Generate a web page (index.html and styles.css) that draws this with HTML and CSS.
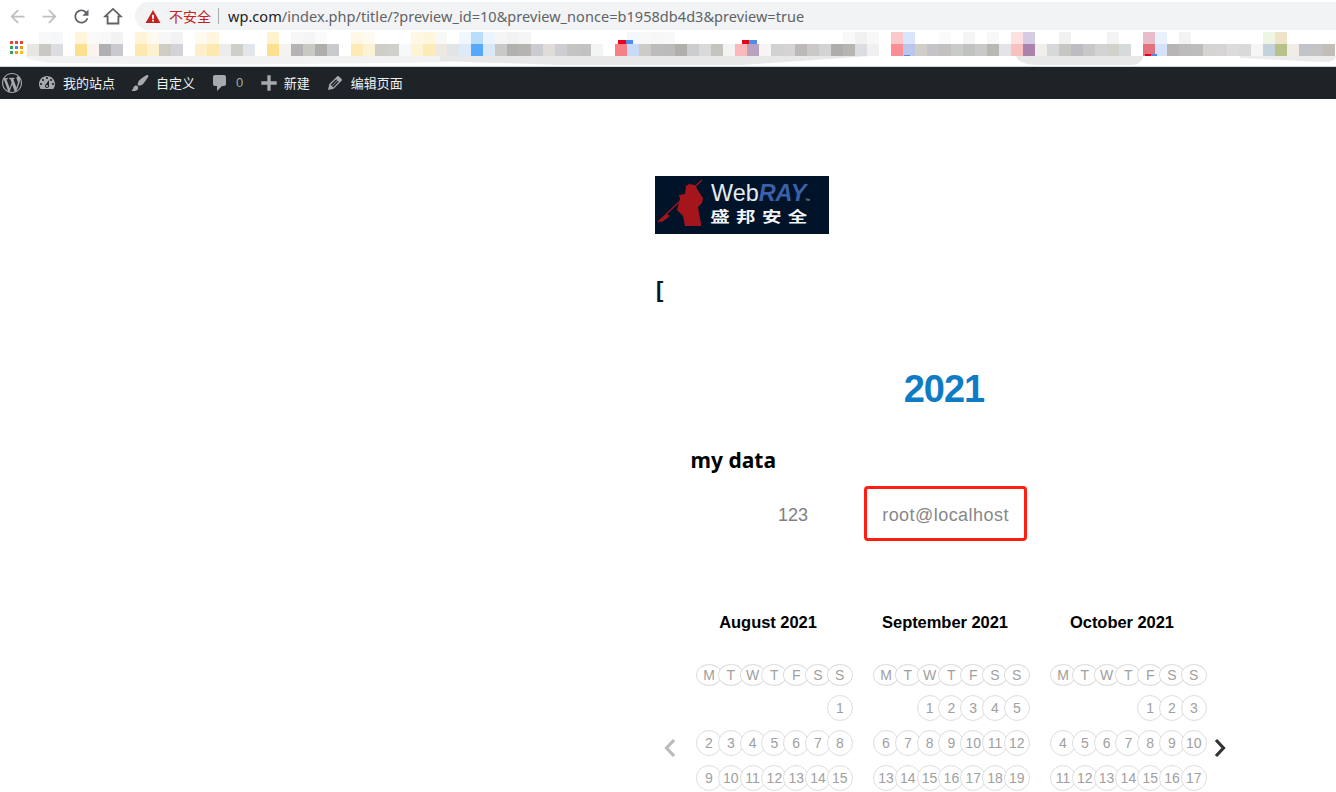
FILE: index.html
```html
<!DOCTYPE html>
<html lang="zh-CN">
<head>
<meta charset="utf-8">
<title>2021</title>
<link rel="stylesheet" href="styles.css">
</head>
<body>
<header class="chrome">
  <div class="toolbar">
    <nav class="nav-icons">
      <svg class="nav-icon muted" viewBox="0 0 24 24"><path d="M20 11H7.83l5.59-5.59L12 4l-8 8 8 8 1.41-1.41L7.83 13H20v-2z"/></svg>
      <svg class="nav-icon muted" viewBox="0 0 24 24"><path d="M4 11h12.17l-5.59-5.59L12 4l8 8-8 8-1.41-1.41L16.17 13H4v-2z"/></svg>
      <svg class="nav-icon" viewBox="0 0 24 24"><path d="M17.65 6.35C16.2 4.9 14.21 4 12 4c-4.42 0-7.99 3.58-7.99 8s3.57 8 7.99 8c3.73 0 6.84-2.55 7.73-6h-2.08c-.82 2.33-3.04 4-5.65 4-3.31 0-6-2.69-6-6s2.69-6 6-6c1.66 0 3.14.69 4.22 1.78L13 11h7V4l-2.35 2.35z"/></svg>
      <svg class="nav-icon home" viewBox="0 0 24 24"><path d="M2.5 12.5 12 3.5l9.5 9H18.5V21h-13v-8.500z"/></svg>
    </nav>
    <div class="omnibox">
      <svg class="warn" viewBox="0 0 16 14"><path class="warn-tri" d="M8 0 16 14H0z"/><path class="warn-bang" d="M7 5h2v4.500H7zM7 10.500h2v2H7z"/></svg>
      <span class="insecure">不安全</span>
      <span class="sep"></span>
      <span class="url"><b>wp.com</b>/index.php/title/?preview_id=10&amp;preview_nonce=b1958db4d3&amp;preview=true</span>
    </div>
  </div>
  <svg class="bookmarks" width="1336" height="36" viewBox="0 0 1336 36">
    <path fill="#f2f2f2" d="M25 26H450V32Q250 36 60 33 30 32 25 26z"/>
    <path fill="#e8e8e8" d="M440 26H870Q800 31 740 35H560Q500 33 440 31z"/>
    <path fill="#e8e8e8" d="M1016 26H1143Q1142 35 1130 35H1040Q1018 35 1016 26z"/>
    <path fill="#ececec" d="M1240 26H1336Q1336 33 1320 32L1240 28z"/>
    <g class="apps">
      <rect x="10" y="11" fill="#ea4335"/><rect x="15" y="11" fill="#ea4335"/><rect x="20" y="11" fill="#ea4335"/>
      <rect x="10" y="16" fill="#34a853"/><rect x="15" y="16" fill="#4285f4"/><rect x="20" y="16" fill="#f29900"/>
      <rect x="10" y="21" fill="#34a853"/><rect x="15" y="21" fill="#f29900"/><rect x="20" y="21" fill="#fbbc04"/>
    </g>
    <g class="tiles top-row">
      <rect x="39" fill="#f8f8f8"/><rect x="51" fill="#f6f7f9"/><rect x="75" fill="#fff5dc"/><rect x="87" fill="#fafafa"/><rect x="99" fill="#f8f8f8"/><rect x="111" fill="#f2f2f2"/>
      <rect x="135" fill="#fff4d8"/><rect x="147" fill="#fffaf0"/><rect x="159" fill="#f7f7f7"/><rect x="171" fill="#f2f2f2"/><rect x="195" fill="#fffaf0"/><rect x="207" fill="#fff6e0"/>
      <rect x="267" fill="#fff2cc"/><rect x="291" fill="#f7f7f7"/><rect x="303" fill="#f5f5f5"/><rect x="315" fill="#fafafa"/>
      <rect x="351" fill="#fff8e6"/><rect x="363" fill="#fffaf0"/><rect x="411" fill="#fff8e6"/><rect x="423" fill="#fff6dd"/><rect x="435" fill="#f8f8f4"/>
      <rect x="459" fill="#f1f7fe"/><rect x="471" fill="#b9dcfb"/><rect x="483" fill="#ecf4fb"/><rect x="495" fill="#f5f5f5"/><rect x="507" fill="#f2f2f2"/><rect x="519" fill="#f5f5f5"/>
      <rect x="627" fill="#f4f7fd"/><rect x="639" fill="#f8f8f8"/><rect x="651" fill="#f7f7f7"/><rect x="663" fill="#f8f8f8"/>
      <rect x="843" fill="#f8f8f8"/><rect x="855" fill="#f1f1f1"/><rect x="867" fill="#f8f8f8"/>
      <rect x="891" fill="#f9c8c9"/><rect x="903" fill="#d8e5fb"/><rect x="939" fill="#fafafa"/><rect x="963" fill="#f5f5f5"/><rect x="987" fill="#f8f8f6"/>
      <rect x="1011" fill="#fde0e0"/><rect x="1023" fill="#d5cce3"/><rect x="1059" fill="#f1f1f1"/><rect x="1107" fill="#f3f3f3"/>
      <rect x="1143" fill="#e8bdc9"/><rect x="1155" fill="#e9f1fc"/><rect x="1179" fill="#f3f3f3"/>
      <rect x="1263" fill="#eef5e3"/><rect x="1275" fill="#eee3c9"/>
    </g>
    <g class="tiles bottom-row">
      <rect x="27" fill="#e8e6e2"/><rect x="39" fill="#c9c8c4"/><rect x="51" fill="#dcdde3"/><rect x="75" fill="#fde08f"/><rect x="87" fill="#faf3ee"/><rect x="99" fill="#b0afb2"/><rect x="111" fill="#c9c9cf"/>
      <rect x="135" fill="#fde9b0"/><rect x="147" fill="#fdf2d0"/><rect x="159" fill="#cfccc5"/><rect x="171" fill="#d2d3d8"/><rect x="195" fill="#feefc8"/><rect x="207" fill="#fde9b0"/><rect x="219" fill="#ececec"/><rect x="231" fill="#cfcfca"/><rect x="243" fill="#e2e6ea"/>
      <rect x="267" fill="#fde08f"/><rect x="279" fill="#f5f3ef"/><rect x="291" fill="#b5b3b3"/><rect x="303" fill="#c9c9c4"/><rect x="315" fill="#b0adad"/><rect x="327" fill="#c8cace"/>
      <rect x="351" fill="#fdeab5"/><rect x="363" fill="#fcf2d5"/><rect x="375" fill="#cfcdc8"/><rect x="387" fill="#cfcfcb"/><rect x="399" fill="#f8f8fa"/><rect x="411" fill="#fdf3d5"/><rect x="423" fill="#fcebb8"/><rect x="435" fill="#ece9e2"/>
      <rect x="447" fill="#e2e5e8"/><rect x="459" fill="#dceafa"/><rect x="471" fill="#55a9f8"/><rect x="483" fill="#d9e8f5"/><rect x="495" fill="#c9cac7"/><rect x="507" fill="#b2b1af"/><rect x="519" fill="#b5b4b0"/><rect x="531" fill="#cbccd1"/><rect x="543" fill="#e0dcd9"/><rect x="555" fill="#cdcdd3"/><rect x="567" fill="#c4c4c2"/><rect x="579" fill="#c2c2c2"/><rect x="591" fill="#f3f4f4"/>
      <rect x="615" fill="#f58085"/><rect x="627" fill="#c8daf8"/><rect x="639" fill="#cdcbc8"/><rect x="651" fill="#bdbcbd"/><rect x="663" fill="#bdbbba"/><rect x="675" fill="#b0afac"/><rect x="687" fill="#cbcccd"/><rect x="699" fill="#d8d9d8"/><rect x="711" fill="#c4c3be"/><rect x="723" fill="#f3f3f3"/>
      <rect x="735" fill="#f9b8b9"/><rect x="747" fill="#b9a2c0"/><rect x="759" fill="#f5f5f5"/><rect x="771" fill="#d3d2d2"/><rect x="783" fill="#d5d3d3"/><rect x="795" fill="#bdb9b9"/><rect x="807" fill="#cac9c8"/><rect x="819" fill="#d3d3d3"/><rect x="831" fill="#aeadab"/><rect x="843" fill="#b6b5b2"/><rect x="855" fill="#dcdde3"/><rect x="867" fill="#f0f0f0"/>
      <rect x="891" fill="#f98f94"/><rect x="903" fill="#bac6ea"/><rect x="915" fill="#cfcec9"/><rect x="927" fill="#c5c3c8"/><rect x="939" fill="#c3c0c0"/><rect x="951" fill="#c8cbc8"/><rect x="963" fill="#bfc2bf"/><rect x="975" fill="#c9c9c7"/><rect x="987" fill="#b9b9b4"/><rect x="999" fill="#e3e4e8"/>
      <rect x="1011" fill="#f9c0c0"/><rect x="1023" fill="#ab82ac"/><rect x="1035" fill="#f0efe9"/><rect x="1047" fill="#d6d8da"/><rect x="1059" fill="#c6c6c2"/><rect x="1071" fill="#bdbcc2"/><rect x="1083" fill="#c8c8c8"/><rect x="1095" fill="#d2d3d5"/><rect x="1107" fill="#d2d2cd"/><rect x="1119" fill="#d6dadb"/>
      <rect x="1143" fill="#e0737c"/><rect x="1155" fill="#d4e3fa"/><rect x="1167" fill="#b8b5b7"/><rect x="1179" fill="#bdbcbc"/><rect x="1191" fill="#bebcbc"/><rect x="1203" fill="#d6d4d2"/><rect x="1215" fill="#d7d4d6"/><rect x="1227" fill="#dcdcdc"/><rect x="1239" fill="#dad8d8"/><rect x="1251" fill="#f5f5f5"/>
      <rect x="1263" fill="#c4d2dc"/><rect x="1275" fill="#b8c18a"/><rect x="1287" fill="#f2ece8"/><rect x="1299" fill="#c2c3c8"/><rect x="1311" fill="#c3c3c3"/><rect x="1323" fill="#c3bdb8"/>
    </g>
    <path fill="#e8001c" d="M618 10h8v4h-8zM742 10h7v4h-7zM1145 24h6v2h-6z"/>
    <path fill="#4a8cf0" d="M626 10h7v4h-7zM749 10h8v4h-8zM1151 24h6v2h-6zM904 25h6v1h-6z"/>
  </svg>
</header>

<div class="adminbar">
  <svg class="ab-logo" viewBox="0 0 20 20"><path d="M20 10c0-5.51-4.490-10-10-10C4.480 0 0 4.490 0 10c0 5.520 4.480 10 10 10 5.510 0 10-4.480 10-10zM7.780 15.370L4.370 6.220c.55-.02 1.170-.08 1.170-.08.5-.06.44-1.130-.06-1.100 0 0-1.450.11-2.370.11-.18 0-.37 0-.58-.01C4.120 2.690 6.870 1.110 10 1.110c2.330 0 4.450.87 6.050 2.340-.68-.11-1.650.39-1.650 1.580 0 .74.45 1.360.9 2.100.35.61.55 1.360.55 2.460 0 1.490-1.400 5-1.400 5l-3.030-8.370c.54-.02.82-.17.82-.17.5-.05.44-1.250-.06-1.220 0 0-1.440.12-2.380.12-.87 0-2.330-.12-2.330-.12-.5-.03-.56 1.200-.06 1.220l.92.08 1.260 3.410zM17.410 10c.24-.64.74-1.870.43-4.250.7 1.290 1.050 2.710 1.050 4.250 0 3.290-1.730 6.240-4.400 7.780.97-2.590 1.940-5.200 2.920-7.780zM6.100 18.090C3.120 16.650 1.110 13.530 1.110 10c0-1.300.23-2.480.72-3.590C3.250 10.300 4.670 14.200 6.100 18.090zm4.030-6.630l2.580 6.980c-.86.29-1.760.45-2.710.45-.79 0-1.570-.11-2.290-.33.81-2.380 1.620-4.740 2.420-7.100z"/></svg>
  <svg class="ab-icon dash" viewBox="0 0 20 20"><path d="M3.760 16h12.480c1.100-1.370 1.760-3.110 1.760-5 0-4.420-3.580-8-8-8s-8 3.580-8 8c0 1.890.66 3.630 1.760 5zM10 4c.55 0 1 .45 1 1s-.45 1-1 1-1-.45-1-1 .45-1 1-1zM6 6c.55 0 1 .45 1 1s-.45 1-1 1-1-.45-1-1 .45-1 1-1zm8 0c.55 0 1 .45 1 1s-.45 1-1 1-1-.45-1-1 .45-1 1-1zm-5.370 5.550L12 7v6c0 1.100-.9 2-2 2s-2-.9-2-2c0-.57.24-1.080.63-1.450zM4 10c.55 0 1 .45 1 1s-.45 1-1 1-1-.45-1-1 .45-1 1-1zm12 0c.55 0 1 .45 1 1s-.45 1-1 1-1-.45-1-1 .45-1 1-1zm-5 3c0-.55-.45-1-1-1s-1 .45-1 1 .45 1 1 1 1-.45 1-1z"/></svg>
  <span class="ab-label site">我的站点</span>
  <svg class="ab-icon brush" viewBox="0 0 20 20"><path d="M18.330 3.570s.27-.8-.31-1.360c-.53-.52-1.220-.24-1.220-.24-.61.3-5.760 3.470-7.670 5.570-.86.96-2.060 3.790-1.090 4.820.92.98 3.960-.17 4.790-1 2.060-2.060 5.210-7.170 5.500-7.790zM1.400 17.650c2.370-1.560 1.460-3.410 3.230-4.640.93-.65 2.220-.62 3.080.29.63.67.8 2.570-.16 3.460-1.570 1.450-4 1.550-6.150.89z"/></svg>
  <span class="ab-label custom">自定义</span>
  <svg class="ab-icon comment" viewBox="0 0 20 20"><path d="M5 2h9c1.100 0 2 .9 2 2v7c0 1.100-.9 2-2 2h-2l-5 5v-5H5c-1.100 0-2-.9-2-2V4c0-1.100.9-2 2-2z"/></svg>
  <span class="ab-count">0</span>
  <svg class="ab-icon plus" viewBox="0 0 20 20"><path d="M17 8.500v3h-5.500V17h-3v-5.500H3v-3h5.500V3h3v5.500z"/></svg>
  <span class="ab-label new">新建</span>
  <svg class="ab-icon edit" viewBox="0 0 20 20"><path d="M13.890 3.390l2.710 2.720c.46.46.42 1.240.03 1.640l-8.010 8.020-5.560 1.160 1.160-5.580s7.600-7.630 7.990-8.030c.39-.39 1.220-.39 1.680.07zm-2.730 2.790l-5.590 5.610 1.110 1.110 5.540-5.650zm-2.970 8.230l5.580-5.600-1.070-1.080-5.590 5.600z"/></svg>
  <span class="ab-label">编辑页面</span>
</div>

<main class="page">
  <svg class="logo" width="174" height="58" viewBox="0 0 174 58">
    <rect width="174" height="58" fill="#001329"/>
    <path class="spear" d="M3 46 47 4"/>
    <path class="warrior" d="M34 8l6 1 4 7 4 6-1 5-4 4 3 17v2H30l-2-10-6-6 3-11-1-4 6-1 1-8zM3 45l9-7 3 2-8 6z"/>
    <text class="logo-web" x="56" y="25">Web<tspan class="logo-ray">RAY</tspan></text>
    <text class="logo-tm" x="150" y="26">™</text>
    <text class="logo-cn" x="42.500" y="46">盛邦安全</text>
  </svg>
  <p class="bracket">[</p>
  <section class="column">
    <h1 class="year">2021</h1>
    <h2 class="data-title">my data</h2>
    <div class="data-row">
      <span class="num">123</span>
      <span class="email">root@localhost</span>
    </div>
    <div class="calendar">
      <svg class="cal-arrow prev" viewBox="0 0 14 20"><path d="M11 2 3.500 10 11 18"/></svg>
      <div class="month">
        <h3 class="month-name">August 2021</h3>
        <div class="days">
          <span class="d wd">M</span><span class="d wd">T</span><span class="d wd">W</span><span class="d wd">T</span><span class="d wd">F</span><span class="d wd">S</span><span class="d wd">S</span>
          <span></span><span></span><span></span><span></span><span></span><span></span><span class="d">1</span>
          <span class="d">2</span><span class="d">3</span><span class="d">4</span><span class="d">5</span><span class="d">6</span><span class="d">7</span><span class="d">8</span>
          <span class="d">9</span><span class="d">10</span><span class="d">11</span><span class="d">12</span><span class="d">13</span><span class="d">14</span><span class="d">15</span>
        </div>
      </div>
      <div class="month">
        <h3 class="month-name">September 2021</h3>
        <div class="days">
          <span class="d wd">M</span><span class="d wd">T</span><span class="d wd">W</span><span class="d wd">T</span><span class="d wd">F</span><span class="d wd">S</span><span class="d wd">S</span>
          <span></span><span></span><span class="d">1</span><span class="d">2</span><span class="d">3</span><span class="d">4</span><span class="d">5</span>
          <span class="d">6</span><span class="d">7</span><span class="d">8</span><span class="d">9</span><span class="d">10</span><span class="d">11</span><span class="d">12</span>
          <span class="d">13</span><span class="d">14</span><span class="d">15</span><span class="d">16</span><span class="d">17</span><span class="d">18</span><span class="d">19</span>
        </div>
      </div>
      <div class="month">
        <h3 class="month-name">October 2021</h3>
        <div class="days">
          <span class="d wd">M</span><span class="d wd">T</span><span class="d wd">W</span><span class="d wd">T</span><span class="d wd">F</span><span class="d wd">S</span><span class="d wd">S</span>
          <span></span><span></span><span></span><span></span><span class="d">1</span><span class="d">2</span><span class="d">3</span>
          <span class="d">4</span><span class="d">5</span><span class="d">6</span><span class="d">7</span><span class="d">8</span><span class="d">9</span><span class="d">10</span>
          <span class="d">11</span><span class="d">12</span><span class="d">13</span><span class="d">14</span><span class="d">15</span><span class="d">16</span><span class="d">17</span>
        </div>
      </div>
      <svg class="cal-arrow next" viewBox="0 0 14 20"><path d="M3 2 10.500 10 3 18"/></svg>
    </div>
  </section>
</main>
</body>
</html>
```

FILE: styles.css
```css
* { box-sizing: border-box; }
html, body { margin: 0; height: 792px; overflow: hidden; background: #fff; }
body { font-family: "Liberation Sans", "Noto Sans CJK SC", sans-serif; }

/* browser chrome */
.chrome { height: 67px; border-bottom: 1px solid #d6d6d6; }
.toolbar { height: 30px; display: flex; align-items: flex-start; padding-top: 2px; }
.nav-icons { width: 135px; height: 28px; display: flex; align-items: center; padding-left: 6.5px; gap: 11px; flex: none; }
.nav-icon { width: 21px; height: 21px; fill: #5f6368; flex: none; }
.nav-icon.muted { fill: #bcbfc3; }
.nav-icon.home { width: 20px; height: 20px; fill: none; stroke: #5f6368; stroke-width: 2.2; margin-left: .5px; }
.omnibox { flex: 1; height: 28px; background: #f1f3f4; border-radius: 14px 0 0 14px; display: flex; align-items: center; padding-left: 10px; font-family: "Noto Sans", "Noto Sans CJK SC", sans-serif; white-space: nowrap; }
.warn { width: 16px; height: 13px; flex: none; }
.warn-tri { fill: #c5221f; }
.warn-bang { fill: #fff; }
.insecure { margin-left: 8px; font-size: 14px; color: #c5221f; }
.sep { width: 1px; height: 16px; background: #a8abaf; margin: 0 9px 0 7px; }
.url { font-size: 14.5px; letter-spacing: .05px; color: #5f6368; }
.url b { font-weight: 400; color: #202124; }
.bookmarks { display: block; }
.tiles rect { width: 12px; height: 12px; }
.top-row { transform: translateY(2px); }
.bottom-row { transform: translateY(14px); }
.apps rect { width: 3px; height: 3px; }

/* admin bar */
.adminbar { height: 32px; background: #1d2327; display: flex; align-items: center; font-family: "Noto Sans CJK SC", sans-serif; font-size: 13px; color: #f0f0f1; }
.ab-logo { width: 20px; height: 20px; margin-left: 2px; fill: #a7aaad; flex: none; }
.ab-icon { fill: #a7aaad; flex: none; }
.ab-label { white-space: nowrap; margin-top: -2px; }
.dash { width: 20px; height: 20px; margin-left: 15px; }
.site { margin-left: 6px; }
.brush { width: 20px; height: 20px; margin-left: 15px; }
.custom { margin-left: 6px; }
.comment { width: 20px; height: 20px; margin-left: 15px; }
.ab-count { margin-left: 6px; margin-top: -2px; color: #a7aaad; font-family: "Liberation Sans", sans-serif; font-size: 13px; }
.plus { width: 22px; height: 22px; margin-left: 14.4px; }
.new { margin-left: 4px; }
.edit { width: 20px; height: 20px; margin-left: 15.5px; }
.edit + .ab-label { margin-left: 5.5px; }

/* page */
.page { padding: 77px 0 0 655px; }
.logo { display: block; }
.spear { stroke: #a5151c; stroke-width: 1.2; fill: none; }
.warrior { fill: #a5151c; }
.logo-web { font-family: "Liberation Sans", sans-serif; font-size: 23.4px; fill: #e6ebf0; }
.logo-ray { font-weight: 700; font-style: italic; fill: #3b5fa8; }
.logo-tm { font-size: 5px; fill: #c8d0d8; }
.logo-cn { font-family: "Noto Sans CJK SC", sans-serif; font-weight: 700; font-size: 15px; letter-spacing: 4.9px; fill: #f2f4f6; transform: scaleX(1.3); }
.bracket { margin: 43px 0 0 1px; font-size: 22px; line-height: 26px; font-weight: 700; color: #00172b; }
.column { width: 578px; }
.year { margin: 64px 0 0; text-align: center; font-size: 38px; line-height: 44px; font-weight: 700; letter-spacing: -1px; color: #0e7cc4; }
.data-title { margin: 35px 0 0 35.5px; font-family: "Noto Sans", sans-serif; font-size: 21px; line-height: 28px; font-weight: 700; color: #000; }
.data-row { display: flex; align-items: center; margin: 12px 0 0 123px; font-size: 18px; color: #808080; }
.num { padding-top: 4px; }
.email { margin-left: 56px; width: 163px; height: 55px; padding-top: 3px; border: 3px solid #ff1e10; border-radius: 4px; display: flex; align-items: center; justify-content: center; letter-spacing: .45px; color: #888; }

/* calendar */
.calendar { display: flex; align-items: flex-start; margin: 70px 0 0 8px; }
.cal-arrow { width: 14px; height: 20px; fill: none; stroke-width: 3.200; flex: none; margin-top: 127px; }
.prev { stroke: #bbb; }
.next { stroke: #333; margin-left: 6px; }
.month { width: 157px; flex: none; margin-left: 20px; }
.prev + .month { margin-left: 19px; }
.month-name { margin: 0 0 31px; padding-right: 13px; text-align: center; font-size: 16.500px; line-height: 22px; font-weight: 700; letter-spacing: -.05px; color: #000; white-space: nowrap; }
.days { display: grid; grid-template-columns: repeat(7, 21.800px); grid-auto-rows: 26px; row-gap: 9px; grid-template-rows: 22px; justify-items: start; }
.d { width: 26px; height: 26px; border: 1.500px solid #dedede; border-radius: 50%; background: #fff; display: flex; align-items: center; justify-content: center; font-size: 14px; color: #a0a0a0; }
.d.wd { height: 22px; }
```
